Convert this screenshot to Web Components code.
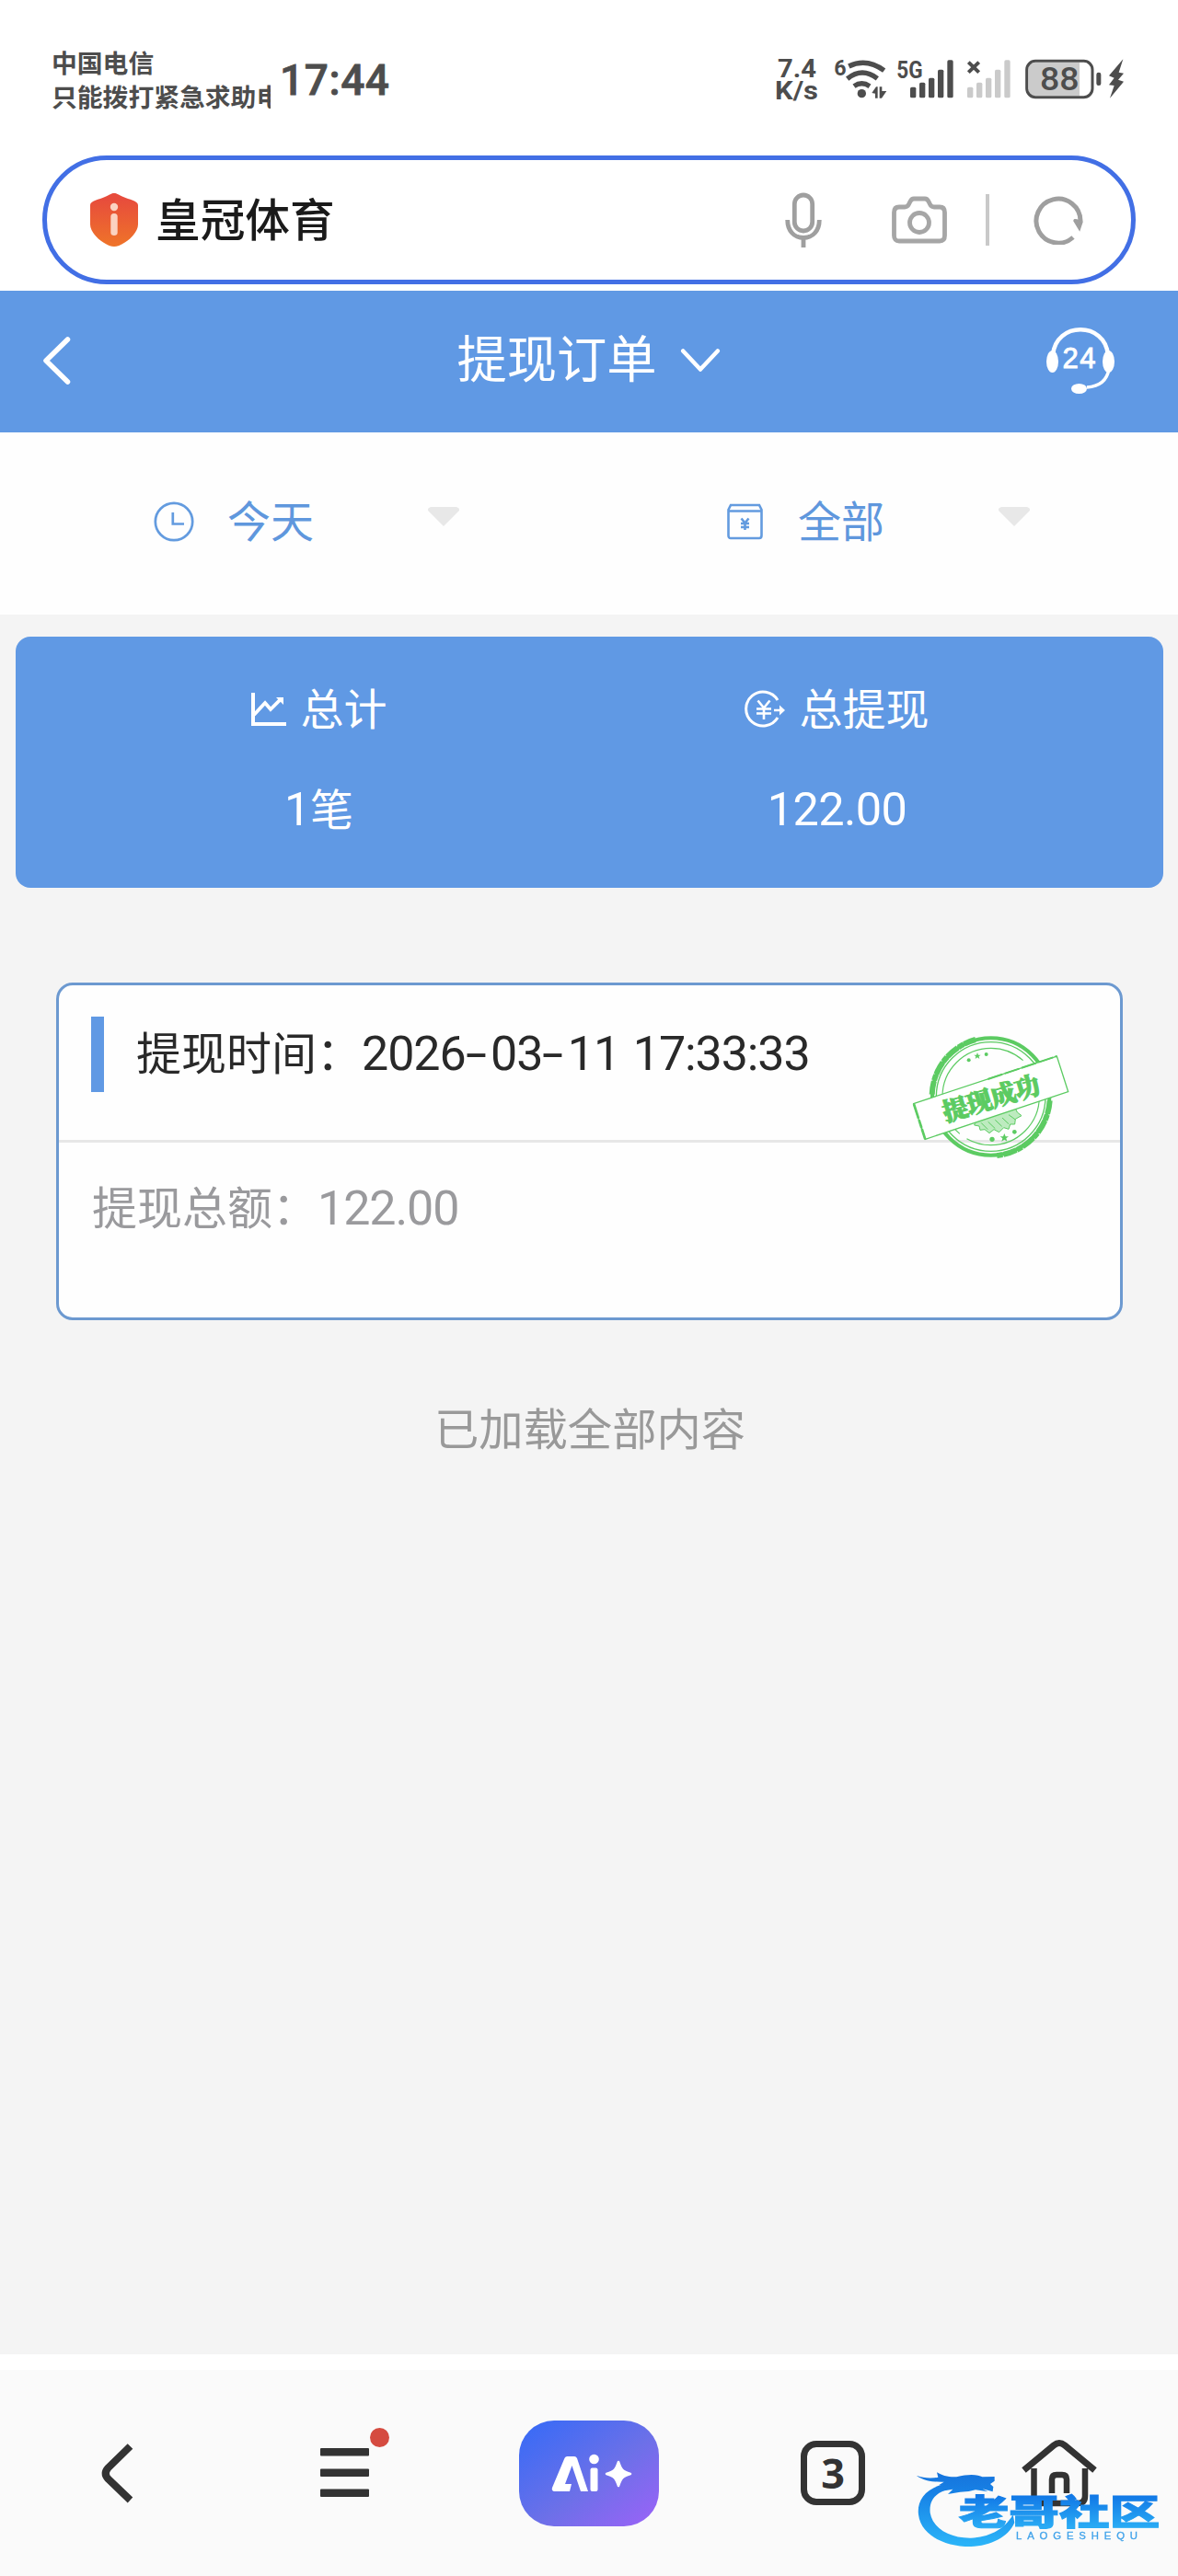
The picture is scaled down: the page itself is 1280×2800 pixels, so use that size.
<!DOCTYPE html>
<html lang="zh-CN">
<head>
<meta charset="utf-8">
<meta name="viewport" content="width=1280">
<title>提现订单</title>
<style>
html,body{margin:0;padding:0;background:#fff}
body{width:1280px;height:2800px;overflow:hidden;font-family:"Noto Sans CJK SC",sans-serif}
</style>
</head>
<body>
<app-screen></app-screen>
<script>
const define = (name, html) => {
  const t = document.createElement('template');
  t.innerHTML = html;
  customElements.define(name, class extends HTMLElement {
    constructor() {
      super();
      this.attachShadow({mode: 'open'}).appendChild(t.content.cloneNode(true));
    }
  });
};

define('status-bar', `
<style>
:host{display:flex;height:169px;box-sizing:border-box;padding:49px 0 0 56px;color:#4d4d4d;align-items:flex-start}
.carrier{width:238px;overflow:hidden;white-space:nowrap;font-size:27.8px;font-weight:700;line-height:36.5px}
.clock{margin:15px 0 0 8px;width:124px;height:46px}
.icons{margin:-9px 0 0 394px;width:430px;height:90px}
svg{display:block;overflow:visible}
text{font-family:Roboto,sans-serif}
</style>
<div class="carrier"><div>中国电信</div><div>只能拨打紧急求助电</div></div>
<svg class="clock" viewBox="0 0 124 46"><text x="2" y="39" font-size="46" font-weight="500" fill="#4d4d4d" stroke="#4d4d4d" stroke-width=".8" textLength="119">17:44</text></svg>
<svg class="icons" viewBox="0 0 1290 270" fill="#4d4d4d">
  <text x="75" y="133" font-size="84" font-weight="700" textLength="126" lengthAdjust="spacingAndGlyphs">7.4</text>
  <text x="66" y="205" font-size="82" font-weight="700" textLength="141" lengthAdjust="spacingAndGlyphs">K/s</text>
  <text x="259" y="125" font-size="74" font-weight="700" textLength="40" lengthAdjust="spacingAndGlyphs">6</text>
  <g fill="none" stroke="#4d4d4d" stroke-width="16">
    <path d="M307 96Q365 68 422 110"/><path d="M302 137Q350 98 400 136"/><path d="M324 161Q349 144 375 161"/>
  </g>
  <circle cx="349" cy="185" r="14"/>
  <path d="M382 183L396 163H401V200H393V185ZM407 163H415V177H430L414 200H407Z"/>
  <text x="463" y="135" font-size="78" font-weight="700" textLength="85" lengthAdjust="spacingAndGlyphs">5G</text>
  <g><rect x="507" y="164" width="19" height="35" rx="5"/><rect x="537" y="149" width="19" height="50" rx="5"/><rect x="567" y="134" width="19" height="65" rx="5"/><rect x="597" y="107" width="19" height="92" rx="5"/><rect x="628" y="76" width="19" height="123" rx="5"/></g>
  <g fill="#cacaca"><rect x="693" y="164" width="19" height="35" rx="5"/><rect x="723" y="149" width="19" height="50" rx="5"/><rect x="753" y="134" width="19" height="65" rx="5"/><rect x="783" y="107" width="19" height="92" rx="5"/><rect x="814" y="76" width="19" height="123" rx="5"/></g>
  <path d="M697 83L731 116M731 83L697 116" stroke="#4d4d4d" stroke-width="12"/>
  <path d="M1059 84H912Q892 84 892 106V172Q892 193 912 193H1059Z" fill="#cbcbcb"/>
  <rect x="887" y="79" width="214" height="118" rx="28" fill="none" stroke="#4d4d4d" stroke-width="9"/>
  <text x="930" y="175" font-size="106" font-weight="500" textLength="128" lengthAdjust="spacingAndGlyphs">88</text>
  <rect x="1114" y="116" width="15" height="43" rx="7"/>
  <path d="M1201 73L1155 127L1172 134L1155 157L1172 159L1158 200L1203 146L1185 140L1203 119L1187 116Z"/>
</svg>`);

define('search-pill', `
<style>
:host{display:flex;align-items:center;box-sizing:border-box;height:140px;margin:0 46px 7px;border:5px solid #426fe5;border-radius:70px;background:#fff;padding-left:46px;color:#1a1a1a}
svg{display:block;flex:none}
.name{font-size:48.7px;line-height:70px;font-weight:500;margin:-6px 0 0 18px;width:196px;white-space:nowrap}
.mic{margin-left:488px}.cam{margin-left:76px}
.line{width:4px;height:56px;background:#c9c9c9;margin-left:42px}
.re{margin-left:48px}
</style>
<svg width="54" height="60" viewBox="0 0 54 60"><defs><linearGradient id="g" x1="0" y1="0" x2="0" y2="1"><stop offset=".1" stop-color="#e74c3c"/><stop offset="1" stop-color="#ef7429"/></linearGradient></defs><path d="M27 1C30 1 32 3 37 5C43 8 53 9 53 14V35C53 46 36 59 27 59S1 46 1 35V14C1 9 11 8 17 5C22 3 24 1 27 1Z" fill="url(#g)"/><circle cx="27" cy="16" r="4.2" fill="#fbd2c1"/><rect x="23.3" y="23" width="7.4" height="24" rx="3.5" fill="#fbd2c1"/></svg>
<div class="name"><slot></slot></div>
<svg class="mic" width="40" height="60" viewBox="0 0 40 60" fill="none" stroke="#9f9f9f" stroke-width="4.8"><rect x="10.3" y="3" width="19.4" height="39" rx="9.7"/><path d="M2.7 30C2.7 42 10 49.5 20 49.5S37.3 42 37.3 30M20 50V60"/></svg>
<svg class="cam" width="60" height="52" viewBox="0 0 60 52" fill="none" stroke="#a6a6a6" stroke-width="4.8" stroke-linejoin="round"><path d="M8 12H14Q17 12 18.500 9L20 6Q21.500 3 24 3H36Q38.500 3 40 6L41.500 9Q43 12 46 12H52Q57.500 12 57.500 18V43Q57.500 49 52 49H8Q2.500 49 2.500 43V18Q2.500 12 8 12Z"/><circle cx="30" cy="29" r="10.500"/></svg>
<div class="line"></div>
<svg class="re" width="54" height="54" viewBox="0 0 54 54" fill="none" stroke="#9f9f9f" stroke-width="5"><path d="M43 46A24 24 0 1 1 51 28"/><path d="M44 28Q44 26 47 27L53 29L50 38Z" fill="#9f9f9f" stroke="#9f9f9f" stroke-width="1.500"/></svg>`);

define('page-header', `
<style>
:host{display:grid;grid-template-columns:1fr auto 1fr;align-items:center;height:154px;background:#6099e4;color:#fff;box-sizing:border-box;padding:0 66px 0 44px}
svg{display:block;overflow:visible}
.title{display:flex;align-items:center;gap:26px;font-size:54.3px;line-height:80px;margin-left:20px}
.title span{margin-top:-13px}
.title svg{margin-top:-2px}
.help{justify-self:end}
</style>
<svg width="34" height="56" viewBox="0 0 34 56" fill="none" stroke="#fff" stroke-width="5.500" stroke-linecap="round" stroke-linejoin="round"><path d="M29.500 4L6 27L29.500 50"/></svg>
<div class="title"><span><slot></slot></span><svg width="42" height="25" viewBox="0 0 42 25" fill="none" stroke="#fff" stroke-width="4.500" stroke-linecap="round" stroke-linejoin="round"><path d="M2.200 1.500L21 21.500L39.800 1.500"/></svg></div>
<svg class="help" width="80" height="74" viewBox="1132 356 80 74"><path d="M1142 386C1145 349 1199 349 1202 386" fill="none" stroke="#fff" stroke-width="4.500"/><path d="M1203 401C1201 413 1193 420 1179 421" fill="none" stroke="#fff" stroke-width="3.500"/><ellipse cx="1141.500" cy="393" rx="6.500" ry="12" fill="#fff"/><ellipse cx="1202.500" cy="393" rx="6.500" ry="12" fill="#fff"/><ellipse cx="1170.500" cy="422.500" rx="8.500" ry="5.500" fill="#fff"/><text x="1152.500" y="400" font-family="Liberation Sans,sans-serif" font-size="31" fill="#fff" stroke="#fff" stroke-width=".9" textLength="36">24</text></svg>`);

define('filter-item', `
<style>
:host{display:flex;align-items:center;color:#5f97dd;font-size:47px;line-height:70px;height:70px}
::slotted(svg){display:block;flex:none}
.t{width:94px;white-space:nowrap;margin-top:-6px;flex:none}
.a{margin:-12px 0 0 123px;flex:none}
</style>
<slot name="icon"></slot><span class="t"><slot></slot></span>
<svg class="a" width="36" height="21" viewBox="0 0 36 21"><path d="M4 0H32Q37 2 34 5L18 21L2 5Q-1 2 4 0Z" fill="#e8e8e8"/></svg>`);

define('filter-bar', `
<style>
:host{display:flex;height:198px;box-sizing:border-box;padding:62px 0 0 167px;background:#fefefe}
filter-item{width:621px;flex:none}
.i1{margin-right:36px}.i2{margin-right:38px;margin-left:2px}
</style>
<filter-item><svg slot="icon" class="i1" width="44" height="44" viewBox="0 0 44 44" fill="none" stroke="#639bdf" stroke-width="2.700"><circle cx="22" cy="22" r="20.200"/><path d="M20.800 12V24.500H33"/></svg>今天</filter-item>
<filter-item><svg slot="icon" class="i2" width="39" height="40" viewBox="0 0 39 40" fill="none" stroke="#639bdf" stroke-width="2.600"><path d="M4 2H35L37.500 7V35Q37.500 38 35 38H4Q1.500 38 1.500 35V7ZM1.500 8.500H37.500"/><path d="M15.500 16.500L19.500 21.500L23.500 16.500M19.500 21V29M15 22H24M15 26H24"/></svg>全部</filter-item>`);

define('summary-stat', `
<style>
:host{display:flex;flex-direction:column;align-items:center;width:563px;flex:none}
.h{display:flex;align-items:center;height:70px;font-size:47px;line-height:70px}
::slotted(svg){display:block;flex:none;margin-right:16px;margin-top:5px}
.v{height:70px;line-height:70px;font-size:47px;margin-top:39px}
</style>
<div class="h"><slot name="icon"></slot><slot></slot></div><div class="v"><slot name="value"></slot></div>`);

define('summary-card', `
<style>
:host{display:flex;box-sizing:border-box;height:273px;margin:24px 16px 0 17px;padding:41px 0 0 48px;border-radius:16px;background:#6099e4;color:#fff}
.n{font-family:Roboto,sans-serif;font-size:50.5px;line-height:1px;letter-spacing:-.6px}
svg{overflow:visible}
</style>
<summary-stat><svg slot="icon" width="38" height="36" viewBox="0 0 38 36" fill="none" stroke="#fff" stroke-width="4"><path d="M2 0V34H38"/><path d="M3 24L15 11L21 18L33 6" stroke-width="3.800"/><path d="M27 5H35V13Z" fill="#fff" stroke="none"/></svg>总计<span slot="value"><span class="n">1</span>笔</span></summary-stat>
<summary-stat><svg slot="icon" width="43" height="40" viewBox="0 0 43 40" fill="none" stroke="#fff" stroke-width="3"><path d="M35 10A18.500 18.500 0 1 0 35 29"/><path d="M13.500 10.500L20 18.500L26.500 10.500M20 18V31M12 19.500H28M12 24.500H28M31 21H40" stroke-width="2.600"/><path d="M37 15.500L43 21L37 26.500Z" fill="#fff" stroke="none"/></svg>总提现<span slot="value" class="n">122.00</span></summary-stat>`);

define('success-stamp', `
<style>:host{display:block;width:174px;height:140px}svg{display:block}</style>
<svg width="174" height="140" viewBox="90 100 522 420" fill="none" stroke="#5ccb62">
  <circle cx="350" cy="307" r="191" stroke-width="12"/>
  <path d="M158 300A192 192 0 0 1 300 121M542 320A192 192 0 0 1 370 499" stroke-width="18" stroke-dasharray="44 3 19 2"/>
  <circle cx="350" cy="307" r="178" stroke-width="4"/>
  <circle cx="350" cy="307" r="158" stroke-width="3.500" stroke-dasharray="330 28 500 22"/>
  <path d="M296 400L312 403L315 416L330 414L345 426L360 414L377 423L392 408L408 413L413 397L428 397L430 380L450 369L436 358L430 345L300 389Z" stroke-width="3" fill="#bdebbf"/>
  <path d="M318 392L340 414M341 389L364 411M364 383L386 404M387 376L408 396M408 366L430 382" stroke-width="3"/>
  <g fill="#5ccb62" stroke="none"><path d="M306 163L309 171L317 171L311 176L313 184L306 179L299 184L301 176L295 171L303 171Z"/><circle cx="278" cy="188" r="6"/><circle cx="335" cy="169" r="6"/><path d="M394 427L398 437L408 437L400 443L403 453L394 447L385 453L388 443L380 437L390 437Z"/><circle cx="354" cy="446" r="8"/><circle cx="427" cy="422" r="7"/></g>
  <path d="M98 330L565 175L602 291L136 446Z" fill="#fff" stroke-width="4"/>
  <path d="M99 331L136 446" stroke-width="8" stroke-dasharray="50 4 28 3"/>
  <path d="M340 250L565 175" stroke-width="6" stroke-dasharray="50 8"/>
  <text transform="translate(351 312) rotate(-17)" x="-164" y="31" font-family="'Noto Serif CJK SC','Noto Sans CJK SC',serif" font-weight="900" font-size="83" textLength="328" fill="#5ccb62" stroke="#5ccb62" stroke-width="3">提现成功</text>
</svg>`);

define('order-card', `
<style>
:host{display:block;position:relative;box-sizing:border-box;height:367px;margin:103px 60px 0 61px;border:3px solid #6c99d0;border-radius:18px;background:#fefefe;font-size:49px;white-space:nowrap}
.top{display:flex;height:168px;border-bottom:3px solid #e7e7e7;color:#292929;box-sizing:content-box}
.bar{width:14px;height:82px;background:#6099e4;margin:34px 35px 0 35px}
.tt{line-height:74px;margin-top:34px}
.n{font-family:Roboto,sans-serif;font-size:52px;line-height:1px;letter-spacing:-1.100px;word-spacing:3px}
.n i{display:inline-block;font-style:normal;width:27.500px;transform:scaleX(1.600);transform-origin:0 50%}
.sum{color:#9a9a9d;line-height:74px;margin:31px 0 0 36px}
success-stamp{position:absolute;left:926px;top:52px}
</style>
<div class="top"><div class="bar"></div><div class="tt">提现时间：<span class="n">2026<i>-</i>03<i>-</i>11 17:33:33</span></div></div>
<div class="sum">提现总额：<span class="n">122.00</span></div>
<success-stamp></success-stamp>`);

define('water-mark', `
<style>:host{display:block;width:320px;height:200px;pointer-events:none}svg{display:block;filter:blur(.6px)}</style>
<svg width="320" height="200" viewBox="0 0 960 600">
  <defs><linearGradient id="a" gradientUnits="userSpaceOnUse" x1="0" y1="260" x2="0" y2="500"><stop offset="0" stop-color="#1673dc"/><stop offset=".3" stop-color="#1782e6"/><stop offset="1" stop-color="#2bb4f8"/></linearGradient>
  <linearGradient id="b" gradientUnits="userSpaceOnUse" x1="0" y1="-94" x2="0" y2="8"><stop offset="0" stop-color="#1177e6"/><stop offset="1" stop-color="#29aaf4"/></linearGradient></defs>
  <g fill="url(#a)">
  <path d="M230 293C140 305 108 350 114 400C122 470 205 505 285 504C350 502 408 472 427 426L422 400C392 452 340 474 285 476C215 477 160 444 152 394C148 350 172 322 235 312Z"/>
  <path d="M107 272C130 281 155 282 178 278L174 262C198 276 216 277 238 277C280 266 310 270 322 277L362 276L362 290L348 300L358 309L356 325L323 316L340 325L300 319L278 324L250 326L210 333L226 317L190 323L212 306L180 304L197 293C160 294 130 289 107 272Z"/>
  </g>
  <g transform="translate(245 431) scale(1.420 1)"><text font-family="'Noto Sans CJK SC',sans-serif" font-weight="900" font-size="113" x="0" y="0" textLength="462" lengthAdjust="spacingAndGlyphs" fill="url(#b)" stroke="url(#b)" stroke-width="3">老哥社区</text></g>
  <text font-family="Liberation Sans,sans-serif" font-size="34" x="432" y="480" textLength="396" fill="#42a3ea" stroke="#42a3ea">LAOGESHEQU</text>
</svg>`);

define('bottom-nav', `
<style>
:host{display:flex;position:relative;align-items:center;height:224px;margin-top:17px;padding-left:109px;background:#fafafa;box-sizing:border-box}
svg{display:block;overflow:visible;flex:none}
.menu{position:relative;margin-left:203px}
.menu b{position:absolute;right:-22px;top:-22px;width:21px;height:21px;border-radius:50%;background:#d54b40}
.ai{margin-left:163px}
.tabs{margin-left:154px;box-sizing:border-box;width:70px;height:70px;border:7px solid #333;border-radius:17px;display:flex;align-items:center;justify-content:center;font:700 45px/56px "Noto Sans",sans-serif;color:#333}
.home{margin-left:170px}
water-mark{position:absolute;left:960px;top:24px}
</style>
<svg width="36" height="64" viewBox="0 0 36 64" fill="none" stroke="#333" stroke-width="8"><path d="M32.500 3L8.500 26.500Q3 32.500 8.500 38.500L32.500 61.500"/></svg>
<div class="menu"><svg width="53" height="54" viewBox="0 0 53 54" fill="#333"><rect y="0" width="53" height="8.500" rx="1"/><rect y="22.500" width="53" height="8.500" rx="1"/><rect y="44.500" width="53" height="8.500" rx="1"/></svg><b></b></div>
<svg class="ai" width="152" height="115" viewBox="0 0 152 115"><defs><linearGradient id="p" x1="0" y1="0" x2="1" y2="1"><stop offset=".08" stop-color="#3c6bf5"/><stop offset=".55" stop-color="#6c70e8"/><stop offset="1" stop-color="#9c62f8"/></linearGradient></defs><rect width="152" height="115" rx="38" fill="url(#p)"/>
<path d="M52.500 39H60Q62 39 63 41L75 77H67L57.500 49L50 69H57L55 77H38Q35 76 36 73L49 42Q50 39 52.500 39Z" fill="#fff"/><circle cx="81.500" cy="42" r="5.300" fill="#fff"/><rect x="77.500" y="51.500" width="8" height="25.500" rx="2" fill="#fff"/><path d="M108 45C111 54 112 55 121 58C112 61 111 62 108 71C105 62 104 61 95 58C104 55 105 54 108 45Z" fill="#fff" stroke="#fff" stroke-width="2.500" stroke-linejoin="round"/></svg>
<div class="tabs">3</div>
<svg class="home" width="82" height="74" viewBox="0 0 82 74" fill="none" stroke="#333" stroke-width="7"><path d="M2.500 34L35 7Q41 2 47 7L79.500 34"/><path d="M13.500 32V62Q13.500 70 21 70H61Q69 70 69 62V32" stroke-width="6.500"/><path d="M33 59V44Q33 39 38 39H44Q49 39 49 44V59" stroke-width="6.500"/></svg>
<water-mark></water-mark>`);

define('app-screen', `
<style>
:host{display:flex;flex-direction:column;width:1280px;height:2800px;background:#fff;overflow:hidden}
main{height:1891px;background:#f4f4f4;display:flow-root}
.end{margin-top:80px;text-align:center;font-size:48.300px;line-height:70px;color:#999;padding-left:2px}
</style>
<status-bar></status-bar>
<search-pill>皇冠体育</search-pill>
<page-header>提现订单</page-header>
<filter-bar></filter-bar>
<main>
<summary-card></summary-card>
<order-card></order-card>
<div class="end">已加载全部内容</div>
</main>
<bottom-nav></bottom-nav>`);
</script>
</body>
</html>
